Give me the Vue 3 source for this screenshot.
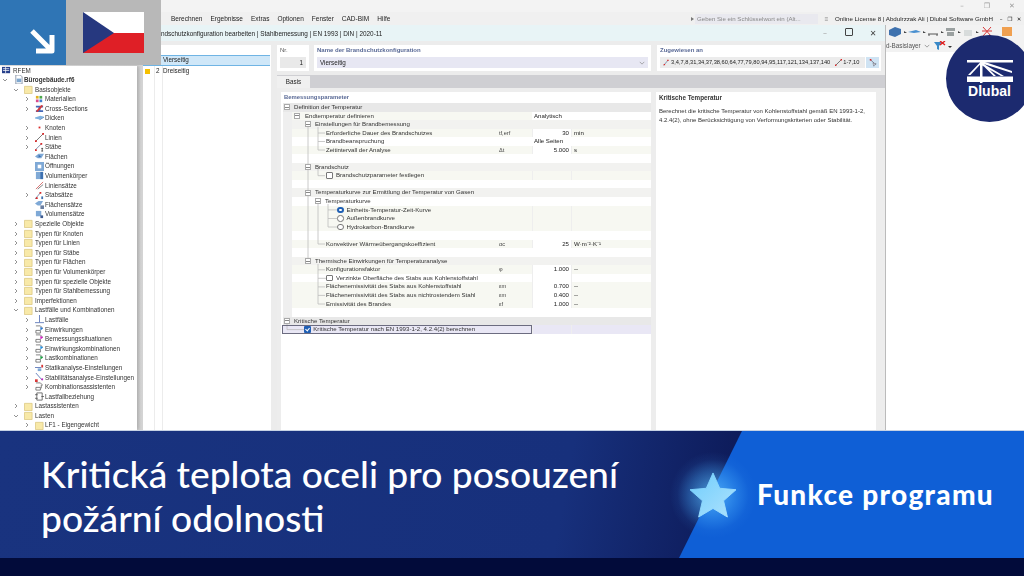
<script setup>
const menu = ['Berechnen', 'Ergebnisse', 'Extras', 'Optionen', 'Fenster', 'CAD-BIM', 'Hilfe']

const icons = {
  app: [{ d: 'M0 1h9v7H0z', f: '#27408b' }, { d: 'M1 3h7M1 5h7M4 1v7', s: '#fff' }],
  file: [{ d: 'M2 0h5l2 2v8H2z', f: '#fff', s: '#6f7f95' }, { d: 'M3 4h5v4H3z', f: '#7ea7cf' }],
  folder: [{ d: 'M.5 1.5h8.5v8H.5z', f: '#f8e9a8', s: '#d9c57c' }],
  mat: [{ d: 'M1 1h3v3H1z', f: '#e0b020' }, { d: 'M5 1h3v3H5z', f: '#4aa84a' }, { d: 'M1 5h3v3H1z', f: '#d84a8a' }, { d: 'M5 5h3v3H5z', f: '#3f7fd0' }],
  cs: [{ d: 'M1 2h8v2H6v3h3v2H1V7h3V4H1z', f: '#4468b8' }, { d: 'M7 1l2 1-6 7-2-1z', f: '#d83838' }],
  thick: [{ d: 'M0 4l6-2 4 1-5 3-5-1z', f: '#7fb2e0' }, { d: 'M5 6l5-3v1L5 7z', f: '#3d78b8' }],
  node: [{ d: 'M4 4h2v2H4z', f: '#d82828' }],
  line: [{ d: 'M1 9L9 1', s: '#444' }, { d: 'M0 8h2v2H0zM8 0h2v2H8z', f: '#d82828' }],
  bar: [{ d: 'M0 8L7 1', s: '#5a6a90' }, { d: 'M6 0h2v2H6zM0 7h2v2H0z', f: '#d82828' }, { d: 'M7 6h2M8 6v3M7 9h2', s: '#222' }],
  surf: [{ d: 'M0 5l4-3h6l-3 5H3z', f: '#7fa9d6' }, { d: 'M4 3l3 2-3 1z', f: '#3d70b0' }],
  open: [{ d: 'M0 0h10v10H0z', f: '#7fa9d6' }, { d: 'M3 3h4v4H3z', f: '#fff' }],
  solid: [{ d: 'M1 1h8v8H1z', f: '#7fa9d6' }, { d: 'M6 1h3v8H6z', f: '#3d70b0' }],
  lineset: [{ d: 'M1 9L9 1', s: '#c84040' }, { d: 'M3 9L9 4', s: '#555' }],
  barset: [{ d: 'M0 9L6 2', s: '#5a6a90' }, { d: 'M5 1h2v2H5zM1 7h2v2H1z', f: '#d82828' }, { d: 'M7 6h2v3H7z', f: '#3d70b0' }],
  surfset: [{ d: 'M0 4l4-3h5l-3 5H3z', f: '#7fa9d6' }, { d: 'M6 6h4v4H6z', f: '#6a7ea0' }],
  solidset: [{ d: 'M1 1h6v6H1z', f: '#7fa9d6' }, { d: 'M6 6h3v3H6z', f: '#3d5a90' }],
  lcase: [{ d: 'M5 0v8M0 8.5h10', s: '#3858a8' }],
  act: [{ d: 'M1 1h5l2 2v1M1 6h5v3H1z', s: '#555' }, { d: 'M6 2l3 2-3 2z', f: '#2a78d0' }],
  sit: [{ d: 'M1 1h5l2 2v1M1 6h5v3H1z', s: '#555' }, { d: 'M6 2l3 2-3 2z', f: '#d020c0' }],
  comb: [{ d: 'M1 1h5l2 2v1M1 6h5v3H1z', s: '#555' }, { d: 'M6 2l3 2-3 2z', f: '#2090e0' }],
  lk: [{ d: 'M1 1h5l2 2v1M1 6h5v3H1z', s: '#555' }, { d: 'M6 2l3 2-3 2z', f: '#18a040' }],
  stat: [{ d: 'M0 5h7', s: '#3858a8' }, { d: 'M7 2h2v3H7z', f: '#d83838' }, { d: 'M3 6h4v3H3z', f: '#7fa9d6' }],
  stab: [{ d: 'M1 0l7 8', s: '#3858a8' }, { d: 'M0 7h3v3H0z', f: '#d83838' }, { d: 'M7 6h2v2H7z', f: '#c028c0' }],
  assist: [{ d: 'M1 1h5l2 2v1M1 6h5v3H1z', s: '#555' }, { d: 'M7 3v4', s: '#555' }],
  rel: [{ d: 'M2 1h6v8H2z', s: '#444' }, { d: 'M0 3h3M0 7h3M7 5h3', s: '#444' }]
}

const tree = [
  { t: 'RFEM', x: 13, icon: 'app', ix: 2 },
  { t: 'Bürogebäude.rf6', x: 24, icon: 'file', ix: 14, arrow: 2, open: true, bold: true },
  { t: 'Basisobjekte', x: 35, icon: 'folder', ix: 24, arrow: 13, open: true },
  { t: 'Materialien', x: 45, icon: 'mat', ix: 35, arrow: 24 },
  { t: 'Cross-Sections', x: 45, icon: 'cs', ix: 35, arrow: 24 },
  { t: 'Dicken', x: 45, icon: 'thick', ix: 35 },
  { t: 'Knoten', x: 45, icon: 'node', ix: 35, arrow: 24 },
  { t: 'Linien', x: 45, icon: 'line', ix: 35, arrow: 24 },
  { t: 'Stäbe', x: 45, icon: 'bar', ix: 35, arrow: 24 },
  { t: 'Flächen', x: 45, icon: 'surf', ix: 35 },
  { t: 'Öffnungen', x: 45, icon: 'open', ix: 35 },
  { t: 'Volumenkörper', x: 45, icon: 'solid', ix: 35 },
  { t: 'Liniensätze', x: 45, icon: 'lineset', ix: 35 },
  { t: 'Stabsätze', x: 45, icon: 'barset', ix: 35, arrow: 24 },
  { t: 'Flächensätze', x: 45, icon: 'surfset', ix: 35 },
  { t: 'Volumensätze', x: 45, icon: 'solidset', ix: 35 },
  { t: 'Spezielle Objekte', x: 35, icon: 'folder', ix: 24, arrow: 13 },
  { t: 'Typen für Knoten', x: 35, icon: 'folder', ix: 24, arrow: 13 },
  { t: 'Typen für Linien', x: 35, icon: 'folder', ix: 24, arrow: 13 },
  { t: 'Typen für Stäbe', x: 35, icon: 'folder', ix: 24, arrow: 13 },
  { t: 'Typen für Flächen', x: 35, icon: 'folder', ix: 24, arrow: 13 },
  { t: 'Typen für Volumenkörper', x: 35, icon: 'folder', ix: 24, arrow: 13 },
  { t: 'Typen für spezielle Objekte', x: 35, icon: 'folder', ix: 24, arrow: 13 },
  { t: 'Typen für Stahlbemessung', x: 35, icon: 'folder', ix: 24, arrow: 13 },
  { t: 'Imperfektionen', x: 35, icon: 'folder', ix: 24, arrow: 13 },
  { t: 'Lastfälle und Kombinationen', x: 35, icon: 'folder', ix: 24, arrow: 13, open: true },
  { t: 'Lastfälle', x: 45, icon: 'lcase', ix: 35, arrow: 24 },
  { t: 'Einwirkungen', x: 45, icon: 'act', ix: 35, arrow: 24 },
  { t: 'Bemessungssituationen', x: 45, icon: 'sit', ix: 35, arrow: 24 },
  { t: 'Einwirkungskombinationen', x: 45, icon: 'comb', ix: 35, arrow: 24 },
  { t: 'Lastkombinationen', x: 45, icon: 'lk', ix: 35, arrow: 24 },
  { t: 'Statikanalyse-Einstellungen', x: 45, icon: 'stat', ix: 35, arrow: 24 },
  { t: 'Stabilitätsanalyse-Einstellungen', x: 45, icon: 'stab', ix: 35, arrow: 24 },
  { t: 'Kombinationsassistenten', x: 45, icon: 'assist', ix: 35, arrow: 24 },
  { t: 'Lastfallbeziehung', x: 45, icon: 'rel', ix: 35 },
  { t: 'Lastassistenten', x: 35, icon: 'folder', ix: 24, arrow: 13 },
  { t: 'Lasten', x: 35, icon: 'folder', ix: 24, arrow: 13, open: true },
  { t: 'LF1 - Eigengewicht', x: 45, icon: 'folder', ix: 35, arrow: 24 }
]

// x = Textanfang, box = Mitte des Minus-Kästchens, mx = linke Kante von Checkbox/Radio
const rows = [
  { t: 'Definition der Temperatur', x: 294, box: 287, kind: 'head' },
  { t: 'Endtemperatur definieren', x: 305, box: 297, kind: 'cream', text: 'Analytisch' },
  { t: 'Einstellungen für Brandbemessung', x: 315, box: 308, kind: 'sub' },
  { t: 'Erforderliche Dauer des Brandschutzes', x: 326, kind: 'cream', sym: 'tf,erf', val: '30', unit: 'min' },
  { t: 'Brandbeanspruchung', x: 326, kind: 'plain', text: 'Alle Seiten' },
  { t: 'Zeitintervall der Analyse', x: 326, kind: 'cream', sym: 'Δt', val: '5.000', unit: 's' },
  { kind: 'empty' },
  { t: 'Brandschutz', x: 315, box: 308, kind: 'sub' },
  { t: 'Brandschutzparameter festlegen', x: 336, mark: 'check', mx: 326, kind: 'cream', cells: true },
  { kind: 'empty' },
  { t: 'Temperaturkurve zur Ermittlung der Temperatur von Gasen', x: 315, box: 308, kind: 'sub' },
  { t: 'Temperaturkurve', x: 325, box: 318, kind: 'plain' },
  { t: 'Einheits-Temperatur-Zeit-Kurve', x: 346.5, mark: 'radio-on', mx: 337, kind: 'cream', cells: true },
  { t: 'Außenbrandkurve', x: 346.5, mark: 'radio', mx: 337, kind: 'cream', cells: true },
  { t: 'Hydrokarbon-Brandkurve', x: 346.5, mark: 'radio', mx: 337, kind: 'cream', cells: true },
  { kind: 'empty' },
  { t: 'Konvektiver Wärmeübergangskoeffizient', x: 326, kind: 'cream', sym: 'αc', val: '25', unit: 'W·m⁻²·K⁻¹' },
  { kind: 'empty' },
  { t: 'Thermische Einwirkungen für Temperaturanalyse', x: 315, box: 308, kind: 'sub' },
  { t: 'Konfigurationsfaktor', x: 326, kind: 'cream', sym: 'φ', val: '1.000', unit: '--' },
  { t: 'Verzinkte Oberfläche des Stabs aus Kohlenstoffstahl', x: 336, mark: 'check', mx: 326, kind: 'plain', cells: true },
  { t: 'Flächenemissivität des Stabs aus Kohlenstoffstahl', x: 326, kind: 'cream', sym: 'εm', val: '0.700', unit: '--' },
  { t: 'Flächenemissivität des Stabs aus nichtrostendem Stahl', x: 326, kind: 'cream', sym: 'εm', val: '0.400', unit: '--' },
  { t: 'Emissivität des Brandes', x: 326, kind: 'cream', sym: 'εf', val: '1.000', unit: '--' },
  { kind: 'empty' },
  { t: 'Kritische Temperatur', x: 294, box: 287, kind: 'head' },
  { t: 'Kritische Temperatur nach EN 1993-1-2, 4.2.4(2) berechnen', x: 314.3, mark: 'check-on', mx: 305, kind: 'selected', cells: true }
]
</script>

<template>
  <div class="screen">
    <div class="app">
      <div class="titlebar">
        <span class="win">&#8211;</span><span class="win">&#10064;</span><span class="win">&#10005;</span>
      </div>
      <div class="menubar">
        <nav class="menu">
          <span v-for="m in menu" :key="m">{{ m }}</span>
        </nav>
        <i class="tri"></i>
        <div class="search">Geben Sie ein Schlüsselwort ein (Alt...</div>
        <div class="search-icon">≡</div>
        <div class="license">Online License 8 | Abdulrzzak Ali | Dlubal Software GmbH</div>
        <div class="menu-ctrl"><span>&#8211;</span><span>&#10064;</span><span>&#10005;</span></div>
      </div>

      <div class="workspace">
        <aside class="side">
          <div class="side-top"></div>
          <div class="tree">
            <div v-for="(n, i) in tree" :key="i" class="tree-row">
              <svg v-if="n.arrow" class="chev" :style="{ left: n.arrow + 'px' }" viewBox="0 0 6 6">
                <path :d="n.open ? 'M1 2l2 2 2-2' : 'M2 1l2 2-2 2'" />
              </svg>
              <svg class="tree-icon" :style="{ left: n.ix + 'px' }" viewBox="0 0 10 10">
                <path v-for="(p, j) in icons[n.icon]" :key="j" :d="p.d" :fill="p.f || 'none'" :stroke="p.s || 'none'" stroke-width=".8" />
              </svg>
              <span class="tree-label" :class="{ bold: n.bold }" :style="{ paddingLeft: n.x + 'px' }">{{ n.t }}</span>
            </div>
          </div>
        </aside>

        <section class="dialog">
          <header class="dialog-head">
            <span class="dialog-title">Brandschutzkonfiguration bearbeiten | Stahlbemessung | EN 1993 | DIN | 2020-11</span>
            <span class="dlg-btn pale">&#8211;</span>
            <span class="dlg-btn square"></span>
            <span class="dlg-btn">&#10005;</span>
          </header>
          <div class="dialog-body">
            <div class="list">
              <div class="list-head"></div>
              <div class="list-row active"><i class="swatch none"></i><b></b><span>Vierseitig</span></div>
              <div class="list-row"><i class="swatch"></i><b>2</b><span>Dreiseitig</span></div>
            </div>
            <div class="main">
              <div class="fields">
                <div class="box nr">
                  <label>Nr.</label>
                  <div class="input grey right">1</div>
                </div>
                <div class="box name">
                  <label>Name der Brandschutzkonfiguration</label>
                  <div class="input lav">
                    <span>Vierseitig</span>
                    <svg class="chev-s" viewBox="0 0 8 5"><path d="M1 1l3 3 3-3" /></svg>
                  </div>
                </div>
                <div class="box assigned">
                  <label>Zugewiesen an</label>
                  <div class="assign-row">
                    <div class="input grey2">
                      <svg class="mini" viewBox="0 0 10 10"><path d="M1 9L7 2" stroke="#5a6a90" fill="none" /><path d="M6 1h2v2H6zM1 7h2v2H1z" fill="#d82828" /></svg>
                      <span class="ids">3,4,7,8,31,34,37,38,60,64,77,79,80,94,95,117,121,134,137,140</span>
                      <svg class="mini second" viewBox="0 0 10 10"><path d="M1 9L9 1" stroke="#444" fill="none" /><path d="M8 0h2v2H8zM0 8h2v2H0z" fill="#d82828" /></svg>
                      <span class="ids">1-7,10</span>
                    </div>
                    <div class="pick">
                      <svg viewBox="0 0 10 10"><path d="M2 1l6 6" stroke="#667" fill="none" /><path d="M1 0h2v2H1z" fill="#d82828" /><path d="M5 5l4 1-2 1-1 2z" fill="#fff" stroke="#334" stroke-width=".5" /></svg>
                    </div>
                  </div>
                </div>
              </div>

              <div class="tabs"><div class="tab">Basis</div></div>

              <div class="panels">
                <div class="params">
                  <div class="params-title">Bemessungsparameter</div>
                  <div class="table">
                    <svg class="guides" viewBox="0 0 368 232" width="368" height="232">
                      <path d="M25 24V156M35 24V47M35 30H42M35 38.500H42M35 47H42M35 66V72.700H42M35 101V141H42M45 101V124M45 106.900H54M45 115.500H54M45 124H54M35 161V201M35 166.800H42M35 175.300H43M35 183.900H42M35 192.400H42M35 201H42M4 221V226.600H22" />
                    </svg>
                    <div v-for="(r, i) in rows" :key="i" class="row" :class="[r.kind, { blank: r.cells }]">
                      <div class="cell-name" :style="{ paddingLeft: r.x ? (r.x - 283) + 'px' : 0 }">
                        <i v-if="r.box" class="minus" :style="{ left: (r.box - 286) + 'px' }"></i>
                        <i v-if="r.mark" class="mark" :class="r.mark" :style="{ left: (r.mx - 283) + 'px' }"></i>
                        {{ r.t }}
                      </div>
                      <template v-if="r.text">
                        <div class="cell-sym"></div>
                        <div class="cell-wide">{{ r.text }}</div>
                      </template>
                      <template v-else-if="r.val">
                        <div class="cell-sym">{{ r.sym }}</div>
                        <div class="cell-val">{{ r.val }}</div>
                        <div class="cell-unit">{{ r.unit }}</div>
                      </template>
                      <template v-else-if="r.cells">
                        <div class="cell-sym"></div>
                        <div class="cell-val"></div>
                        <div class="cell-unit"></div>
                      </template>
                    </div>
                  </div>
                </div>
                <div class="info">
                  <h4>Kritische Temperatur</h4>
                  <p>Berechnet die kritische Temperatur von Kohlenstoffstahl gemäß EN 1993-1-2, 4.2.4(2), ohne Berücksichtigung von Verformungskriterien oder Stabilität.</p>
                </div>
              </div>
            </div>
          </div>
        </section>

        <aside class="canvas">
          <div class="tools">
            <svg viewBox="0 0 138 13" width="138" height="13">
              <path d="M3 5l6-3 6 2v5l-6 3-6-2z" fill="#3f72ae" />
              <path d="M18 6l3 2-3 0z" fill="#444" />
              <path d="M22 7l8-2 5 2-7 1z" fill="#4a90d0" />
              <path d="M37 6l3 2-3 0z" fill="#444" />
              <path d="M42 9h10M43 9v2M51 9v2" stroke="#555" fill="none" />
              <path d="M55 6l3 2-3 0z" fill="#444" />
              <path d="M60 3h9v3h-9zM61 7h7v4h-7z" fill="#9aa0a0" />
              <path d="M72 6l3 2-3 0z" fill="#444" />
              <path d="M78 5h8v6h-8z" fill="#d8dcdc" />
              <path d="M90 6l3 2-3 0z" fill="#444" />
              <path d="M97 2l8 9M105 2l-8 9M96 6h10" stroke="#d83838" fill="none" />
              <path d="M116 2h10v9h-10z" fill="#f0a050" />
            </svg>
          </div>
          <div class="layer">
            <span>d-Basislayer</span>
            <svg class="layer-chev" viewBox="0 0 8 5"><path d="M1 1l3 3 3-3" /></svg>
            <svg class="filter" viewBox="0 0 18 10"><path d="M0 1h8L5 5v4L3 8V5z" fill="#3a8ac8" /><path d="M6 0l5 4M11 0L6 4" stroke="#e02020" stroke-width="1.400" /><path d="M14 5h4l-2 2z" fill="#333" /></svg>
          </div>
          <div class="white"></div>
        </aside>
      </div>
    </div>

    <div class="banner">
      <div class="headline">Kritická teplota oceli pro posouzení<br />požární odolnosti</div>
      <div class="tag"><span>Funkce programu</span></div>
      <div class="glow"></div>
      <svg class="star" viewBox="0 0 50 48">
        <defs>
          <linearGradient id="starFill" x1="0" y1="0" x2="1" y2="1">
            <stop offset="0" stop-color="#6fcdfc" />
            <stop offset="1" stop-color="#aee2fd" />
          </linearGradient>
        </defs>
        <path d="M25 1l7 16 17 1.500-13 11.500 4 17-15-9-15 9 4-17L1 18.500 18 17z" fill="url(#starFill)" stroke="url(#starFill)" stroke-linejoin="round" />
      </svg>
    </div>
    <div class="foot"></div>

    <div class="corner">
      <div class="corner-blue">
        <svg viewBox="0 0 30 30" width="30" height="30">
          <path d="M5 5L25 25M25 9V25H9" fill="none" stroke="#fff" stroke-width="5" stroke-linejoin="round" />
        </svg>
      </div>
      <div class="corner-grey">
        <svg viewBox="0 0 61 41" width="61" height="41">
          <path d="M0 0h61v21H0z" fill="#fff" />
          <path d="M0 21h61v20H0z" fill="#df1f26" />
          <path d="M0 0l31 21L0 41z" fill="#26387f" />
        </svg>
      </div>
    </div>

    <div class="logo">
      <svg viewBox="0 0 46 23" width="46" height="23">
        <path d="M0 0h46v2.500H0zM0 16.500h46v5.500H0z" fill="#fff" />
        <path d="M13 0h2.500v23H13z" fill="#fff" />
        <path d="M1 15L13.500 2h2L3.500 15zM15 2l14 14h-2.500L15 4.500zM15 1l30 10v2L15 3.500zM15 3l22 13h-3L15 5.500z" fill="#fff" />
      </svg>
      <span>Dlubal</span>
    </div>
  </div>
</template>

<style scoped>
.screen {
  position: relative;
  width: 1024px;
  height: 576px;
  overflow: hidden;
  display: flex;
  flex-direction: column;
  font-family: "Liberation Sans", sans-serif;
  color: #222;
}

.app {
  height: 430px;
  flex: none;
  display: flex;
  flex-direction: column;
  background: #f2f2f2;
  overflow: hidden;
  font-size: 6.3px;
  filter: blur(0.3px);
}

.titlebar {
  height: 12px;
  flex: none;
  display: flex;
  justify-content: flex-end;
  align-items: center;
  gap: 17px;
  padding-right: 8px;
  font-size: 7px;
  color: #999;
  background: #f3f3f3;
  font-family: "DejaVu Sans", sans-serif;
}

.win {
  width: 8px;
  text-align: center;
}

.menubar {
  height: 13px;
  flex: none;
  display: flex;
  align-items: center;
  background: #f0f0f0;
}

.menu {
  width: 691px;
  flex: none;
  display: flex;
  gap: 8px;
  padding-left: 171px;
  box-sizing: border-box;
  font-size: 6.5px;
}

.tri {
  width: 0;
  height: 0;
  margin-right: 1px;
  border-left: 3px solid #777;
  border-top: 2px solid transparent;
  border-bottom: 2px solid transparent;
}

.search {
  width: 123px;
  height: 10px;
  flex: none;
  line-height: 10px;
  padding-left: 2px;
  box-sizing: border-box;
  background: #e9e9ef;
  color: #888;
  font-size: 6.1px;
  overflow: hidden;
  white-space: nowrap;
}

.search-icon {
  width: 17px;
  flex: none;
  text-align: center;
  color: #888;
}

.license {
  width: 162px;
  flex: none;
  white-space: nowrap;
  font-size: 6.2px;
}

.menu-ctrl {
  display: flex;
  gap: 1px;
  font-size: 5.500px;
  font-family: "DejaVu Sans", sans-serif;
}

.menu-ctrl span {
  width: 8px;
  text-align: center;
}

.workspace {
  flex: 1;
  min-height: 0;
  display: flex;
}

.side {
  width: 143px;
  flex: none;
  display: flex;
  flex-direction: column;
  background: linear-gradient(90deg, #e8e8e8, #d4d4d4);
}

.side-top {
  height: 40.500px;
  flex: none;
}

.tree {
  flex: 1;
  width: 137px;
  background: #fff;
  box-shadow: 2px 0 3px rgba(0, 0, 0, .18);
  overflow: hidden;
}

.tree-row {
  position: relative;
  height: 9.600px;
  line-height: 9.600px;
  white-space: nowrap;
  color: #333;
}

.tree-label.bold {
  font-weight: 700;
}

.chev {
  position: absolute;
  top: 2px;
  width: 6px;
  height: 6px;
  fill: none;
  stroke: #777;
  stroke-width: .8;
}

.tree-icon {
  position: absolute;
  top: .3px;
  width: 9px;
  height: 9px;
}

.dialog {
  width: 743px;
  flex: none;
  display: flex;
  flex-direction: column;
  background: #ececec;
  border-right: 1px solid #bbb;
  box-sizing: border-box;
}

.dialog-head {
  height: 16px;
  flex: none;
  display: flex;
  align-items: center;
  padding-left: 8px;
  background: #e8f4f6;
  font-size: 6.400px;
}

.dialog-title {
  flex: 1;
  white-space: nowrap;
}

.dlg-btn {
  width: 24px;
  text-align: center;
  font-size: 8px;
  color: #444;
  font-family: "DejaVu Sans", sans-serif;
}

.dlg-btn.pale {
  color: #aaa;
}

.dlg-btn.square::before {
  content: "";
  display: inline-block;
  width: 6px;
  height: 6px;
  border: 1px solid #444;
  border-radius: 1px;
}

.dialog-body {
  flex: 1;
  min-height: 0;
  display: flex;
  gap: 6px;
  padding-top: 4px;
}

.list {
  width: 128px;
  flex: none;
  background:
    linear-gradient(#ececec, #ececec) 11px 20px / 1px 100% no-repeat,
    linear-gradient(#ececec, #ececec) 19px 20px / 1px 100% no-repeat,
    #fff;
}

.list-head {
  height: 10px;
}

.list-row {
  height: 10px;
  line-height: 10px;
  display: flex;
  align-items: center;
  font-size: 6.300px;
}

.list-row.active {
  height: 10.500px;
  background: #cfe7f8;
  border-top: 1px solid #6fb4e4;
  border-bottom: 1px solid #6fb4e4;
  box-sizing: border-box;
  margin-bottom: .5px;
  margin-right: 1px;
}

.swatch {
  width: 5px;
  height: 5px;
  margin: 0 6px 0 2px;
  background: #f6c000;
}

.swatch.none {
  background: none;
}

.list-row b {
  width: 7px;
  font-weight: 400;
}

.main {
  flex: 1;
  min-width: 0;
  display: flex;
  flex-direction: column;
}

.fields {
  height: 26px;
  flex: none;
  display: flex;
  gap: 5px;
  margin-right: 4px;
}

.box {
  background: #fff;
  padding: 1px 3px 0;
  box-sizing: border-box;
}

.box label {
  display: block;
  height: 11px;
  line-height: 9px;
  color: #5a6a96;
  font-size: 6px;
  font-weight: 700;
}

.box.nr {
  width: 32px;
  flex: none;
}

.box.nr label {
  color: #555;
  font-weight: 400;
}

.box.name {
  width: 337px;
  flex: none;
}

.box.assigned {
  width: 224px;
  flex: none;
  margin-left: 1px;
}

.input {
  height: 11px;
  line-height: 11px;
  padding: 0 3px;
  box-sizing: border-box;
  white-space: nowrap;
  overflow: hidden;
}

.grey {
  background: #e9e9e9;
}

.right {
  text-align: right;
}

.lav {
  display: flex;
  justify-content: space-between;
  align-items: center;
  background: #e7e7f3;
}

.chev-s {
  width: 6px;
  height: 4px;
  fill: none;
  stroke: #888;
  stroke-width: .9;
}

.assign-row {
  display: flex;
  gap: 1px;
}

.grey2 {
  width: 205px;
  flex: none;
  display: flex;
  align-items: center;
  gap: 1px;
  background: #ececec;
}

.ids {
  font-size: 5.700px;
}

.mini {
  width: 7px;
  height: 7px;
  flex: none;
}

.mini.second {
  margin-left: 4px;
}

.pick {
  width: 13px;
  height: 11px;
  flex: none;
  display: flex;
  align-items: center;
  justify-content: center;
  background: #cfe3f3;
}

.pick svg {
  width: 8px;
  height: 8px;
}

.tabs {
  height: 13px;
  flex: none;
  margin-top: 4px;
  display: flex;
  align-items: flex-end;
  background: #cfcfd3;
}

.tab {
  width: 33px;
  height: 12px;
  line-height: 12px;
  text-align: center;
  background: #f0f0f0;
}

.panels {
  flex: 1;
  min-height: 0;
  display: flex;
  gap: 5px;
  padding: 4px 9px 0 4px;
  background: #ededed;
}

.params {
  width: 370px;
  flex: none;
  background: #fff;
  overflow: hidden;
}

.params-title {
  height: 11px;
  line-height: 10px;
  padding-left: 3px;
  color: #5a6a96;
  font-size: 5.900px;
  font-weight: 700;
}

.table {
  position: relative;
  margin-left: 2px;
  font-size: 6.100px;
  background: linear-gradient(#efefef, #efefef) 0 0 / 9px 100% no-repeat;
}

.guides {
  position: absolute;
  left: 0;
  top: 0;
  z-index: 1;
  fill: none;
  stroke: #bdbdbd;
  stroke-width: .8;
}

.row {
  height: 8.550px;
  line-height: 8.550px;
  display: grid;
  grid-template-columns: 214px 35px 40px 1fr;
  white-space: nowrap;
}

.row.head {
  background: #e8e8e8;
}

.row.empty {
  background: #fff;
  margin-left: 9px;
}

.row.sub {
  background: #f2f2f0;
  margin-left: 9px;
  grid-template-columns: 205px 35px 40px 1fr;
}

.row.cream {
  background: #f7f8f2;
  margin-left: 9px;
  grid-template-columns: 205px 35px 40px 1fr;
}

.row.plain {
  background: #fff;
  margin-left: 9px;
  grid-template-columns: 205px 35px 40px 1fr;
}

.row.cream .cell-name,
.row.sub .cell-name,
.row.plain .cell-name {
  margin-left: -9px;
}

.row.selected {
  background: #e9e7f5;
}

.row.selected .cell-name {
  grid-column: 1 / span 2;
  margin-left: -1px;
  box-shadow: inset 0 0 0 1px #6c6c80;
}

.row.selected .cell-sym {
  display: none;
}

.cell-name {
  position: relative;
  z-index: 2;
  color: #333;
}

.cell-sym {
  padding-left: 2px;
  color: #444;
  font-size: 5.600px;
}

.cell-val {
  text-align: right;
  padding-right: 2px;
  background: #fff;
  border-left: 1px solid #eee;
  border-right: 1px solid #eee;
}

.row.blank .cell-val {
  background: transparent;
}

.cell-unit {
  padding-left: 2px;
}

.cell-wide {
  grid-column: 3 / span 2;
  padding-left: 2px;
  background: #fff;
}

.minus {
  position: absolute;
  top: 1.300px;
  width: 6px;
  height: 6px;
  box-sizing: border-box;
  border: 1px solid #aaa;
  background: linear-gradient(#888, #888) center / 4px 1px no-repeat, #fff;
}

.mark {
  position: absolute;
  top: 1px;
  width: 6.500px;
  height: 6.500px;
  box-sizing: border-box;
  background: #fff;
  border: 1px solid #777;
}

.mark.check {
  border-radius: 1px;
}

.mark.check-on {
  border: 0;
  border-radius: 1px;
  background: #1f5fb4;
}

.mark.check-on::after {
  content: "";
  position: absolute;
  left: 2px;
  top: 1px;
  width: 2px;
  height: 3px;
  border: solid #fff;
  border-width: 0 1px 1px 0;
  transform: rotate(40deg);
}

.mark.radio {
  border-radius: 50%;
}

.mark.radio-on {
  border-radius: 50%;
  border: 2px solid #1f5fb4;
}

.info {
  flex: 1;
  background: #fff;
  padding: 2px 3px;
  font-size: 6px;
  line-height: 8.500px;
  color: #333;
}

.info h4 {
  margin: 0 0 4.500px;
  font-size: 6.300px;
  font-weight: 700;
}

.info p {
  margin: 0;
}

.canvas {
  flex: 1;
  min-width: 0;
  display: flex;
  flex-direction: column;
  background: #f2f2f2;
}

.tools {
  height: 14px;
  flex: none;
}

.layer {
  height: 13px;
  flex: none;
  display: flex;
  align-items: center;
  white-space: nowrap;
  font-size: 6.300px;
  color: #555;
}

.layer-chev {
  width: 6px;
  height: 4px;
  margin-left: 3px;
  fill: none;
  stroke: #777;
  stroke-width: .9;
}

.filter {
  width: 18px;
  height: 10px;
  margin-left: 4px;
}

.white {
  flex: 1;
  background: #fff;
}

.banner {
  position: relative;
  height: 128px;
  flex: none;
  display: flex;
  background: linear-gradient(100deg, #19337f 0%, #17307c 55%, #0d1a58 72%);
  border-top: 1px solid #c6d2e4;
  box-sizing: border-box;
}

.headline {
  width: 679px;
  flex: none;
  box-sizing: border-box;
  padding: 21px 0 0 41px;
  font-family: Lato, sans-serif;
  font-size: 37.200px;
  line-height: 43.500px;
  font-weight: 500;
  color: #fff;
  white-space: nowrap;
}

.tag {
  flex: 1;
  display: flex;
  align-items: center;
  padding-left: 78px;
  clip-path: polygon(63px 0, 100% 0, 100% 100%, 0 100%);
  background: #0f5fd6;
  font-family: Lato, sans-serif;
  font-size: 28px;
  font-weight: 900;
  letter-spacing: 1.300px;
  color: #fff;
  white-space: nowrap;
}

.tag span {
  margin-top: -2px;
}

.glow {
  position: absolute;
  left: 668px;
  top: 19px;
  width: 90px;
  height: 90px;
  border-radius: 50%;
  background: radial-gradient(circle, rgba(90, 190, 255, .8) 0%, rgba(70, 170, 250, .35) 38%, rgba(60, 150, 240, .08) 56%, rgba(60, 150, 240, 0) 68%);
}

.star {
  position: absolute;
  left: 689px;
  top: 41px;
  width: 48px;
  height: 46px;
}

.foot {
  flex: 1;
  background: #020b3a;
}

.corner {
  position: absolute;
  left: 0;
  top: 0;
  display: flex;
  height: 65px;
}

.corner-blue {
  width: 66px;
  display: flex;
  align-items: flex-end;
  justify-content: flex-end;
  padding: 0 9px 9px 0;
  box-sizing: border-box;
  background: #2f75b5;
}

.corner-grey {
  width: 95px;
  padding: 12px 0 0 17px;
  box-sizing: border-box;
  background: #b8b8b8;
}

.logo {
  position: absolute;
  left: 946px;
  top: 35px;
  width: 87px;
  height: 87px;
  border-radius: 50%;
  background: #1c2a6f;
  display: flex;
  flex-direction: column;
  align-items: center;
  padding-top: 25px;
  box-sizing: border-box;
}

.logo span {
  font-family: "Liberation Sans", sans-serif;
  font-size: 14px;
  line-height: 17px;
  font-weight: 700;
  color: #fff;
}
</style>
